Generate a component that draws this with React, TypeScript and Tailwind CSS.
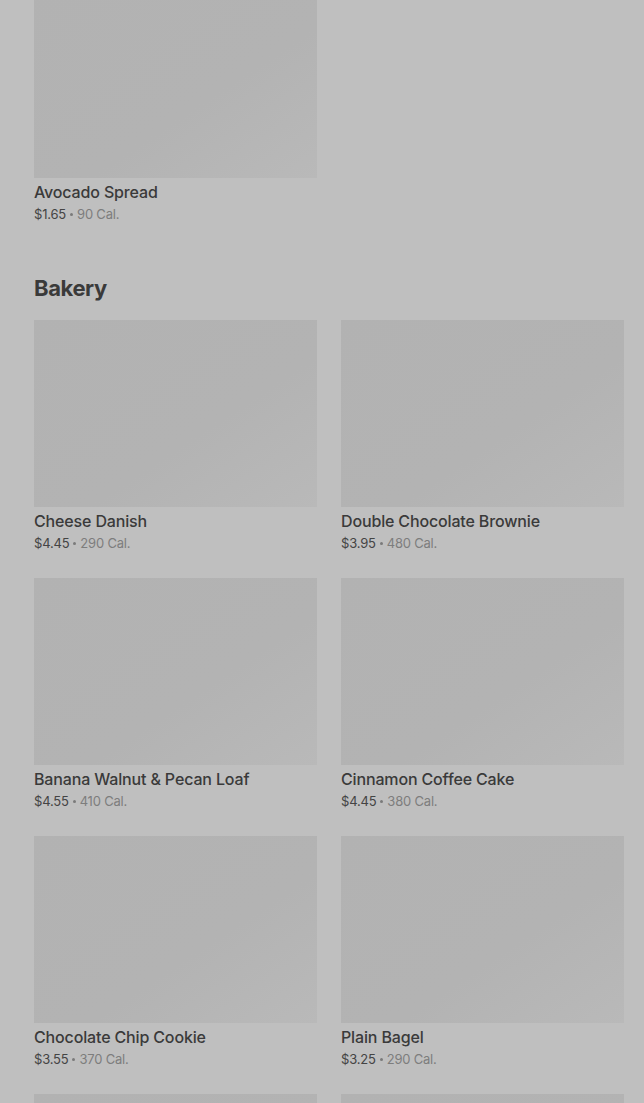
import React from "react";

type Item = { name: string; price: string; cal: string };

const top: Item[] = [{ name: "Avocado Spread", price: "$1.65", cal: "90 Cal." }];

const bakery: Item[] = [
  { name: "Cheese Danish", price: "$4.45", cal: "290 Cal." },
  { name: "Double Chocolate Brownie", price: "$3.95", cal: "480 Cal." },
  { name: "Banana Walnut & Pecan Loaf", price: "$4.55", cal: "410 Cal." },
  { name: "Cinnamon Coffee Cake", price: "$4.45", cal: "380 Cal." },
  { name: "Chocolate Chip Cookie", price: "$3.55", cal: "370 Cal." },
  { name: "Plain Bagel", price: "$3.25", cal: "290 Cal." },
  { name: "", price: "", cal: "" },
  { name: "", price: "", cal: "" },
];

function Card({ item }: { item: Item }) {
  return (
    <div className="flex flex-col">
      <div className="h-[187px] w-full bg-gradient-to-br from-[#b2b2b2] via-[#b3b3b3] via-60% to-[#b9b9b9]" />
      {item.name && (
        <>
          <div className="mt-1 text-[16px] leading-5 font-medium text-[#3a3a3a] tracking-[-0.15px]">
            {item.name}
          </div>
          <div className="mt-0.5 flex h-5 items-center text-[13px] leading-5 text-[#444444] tracking-[-0.2px]">
            <span>{item.price}</span>
            <span className="mx-[4px] h-[3px] w-[3px] rounded-full bg-[#7a7a7a]" />
            <span className="text-[#7d7d7d]">{item.cal}</span>
          </div>
        </>
      )}
    </div>
  );
}

export default function App() {
  return (
    <div
      className="w-[644px] h-[1103px] overflow-hidden bg-[#bfbfbf] pl-[34px] pr-[20px]"
      style={{ fontFamily: "Inter, 'Noto Sans', sans-serif" }}
    >
      <div className="mt-[-9px] grid grid-cols-2 gap-x-6 gap-y-[25px]">
        {top.map((it, i) => (
          <Card key={i} item={it} />
        ))}
      </div>
      <h2 className="mt-[50px] h-7 text-[22px] leading-7 font-bold text-[#3a3a3a] tracking-[-0.4px]">
        Bakery
      </h2>
      <div className="mt-[18px] grid grid-cols-2 gap-x-6 gap-y-[25px]">
        {bakery.map((it, i) => (
          <Card key={i} item={it} />
        ))}
      </div>
    </div>
  );
}
